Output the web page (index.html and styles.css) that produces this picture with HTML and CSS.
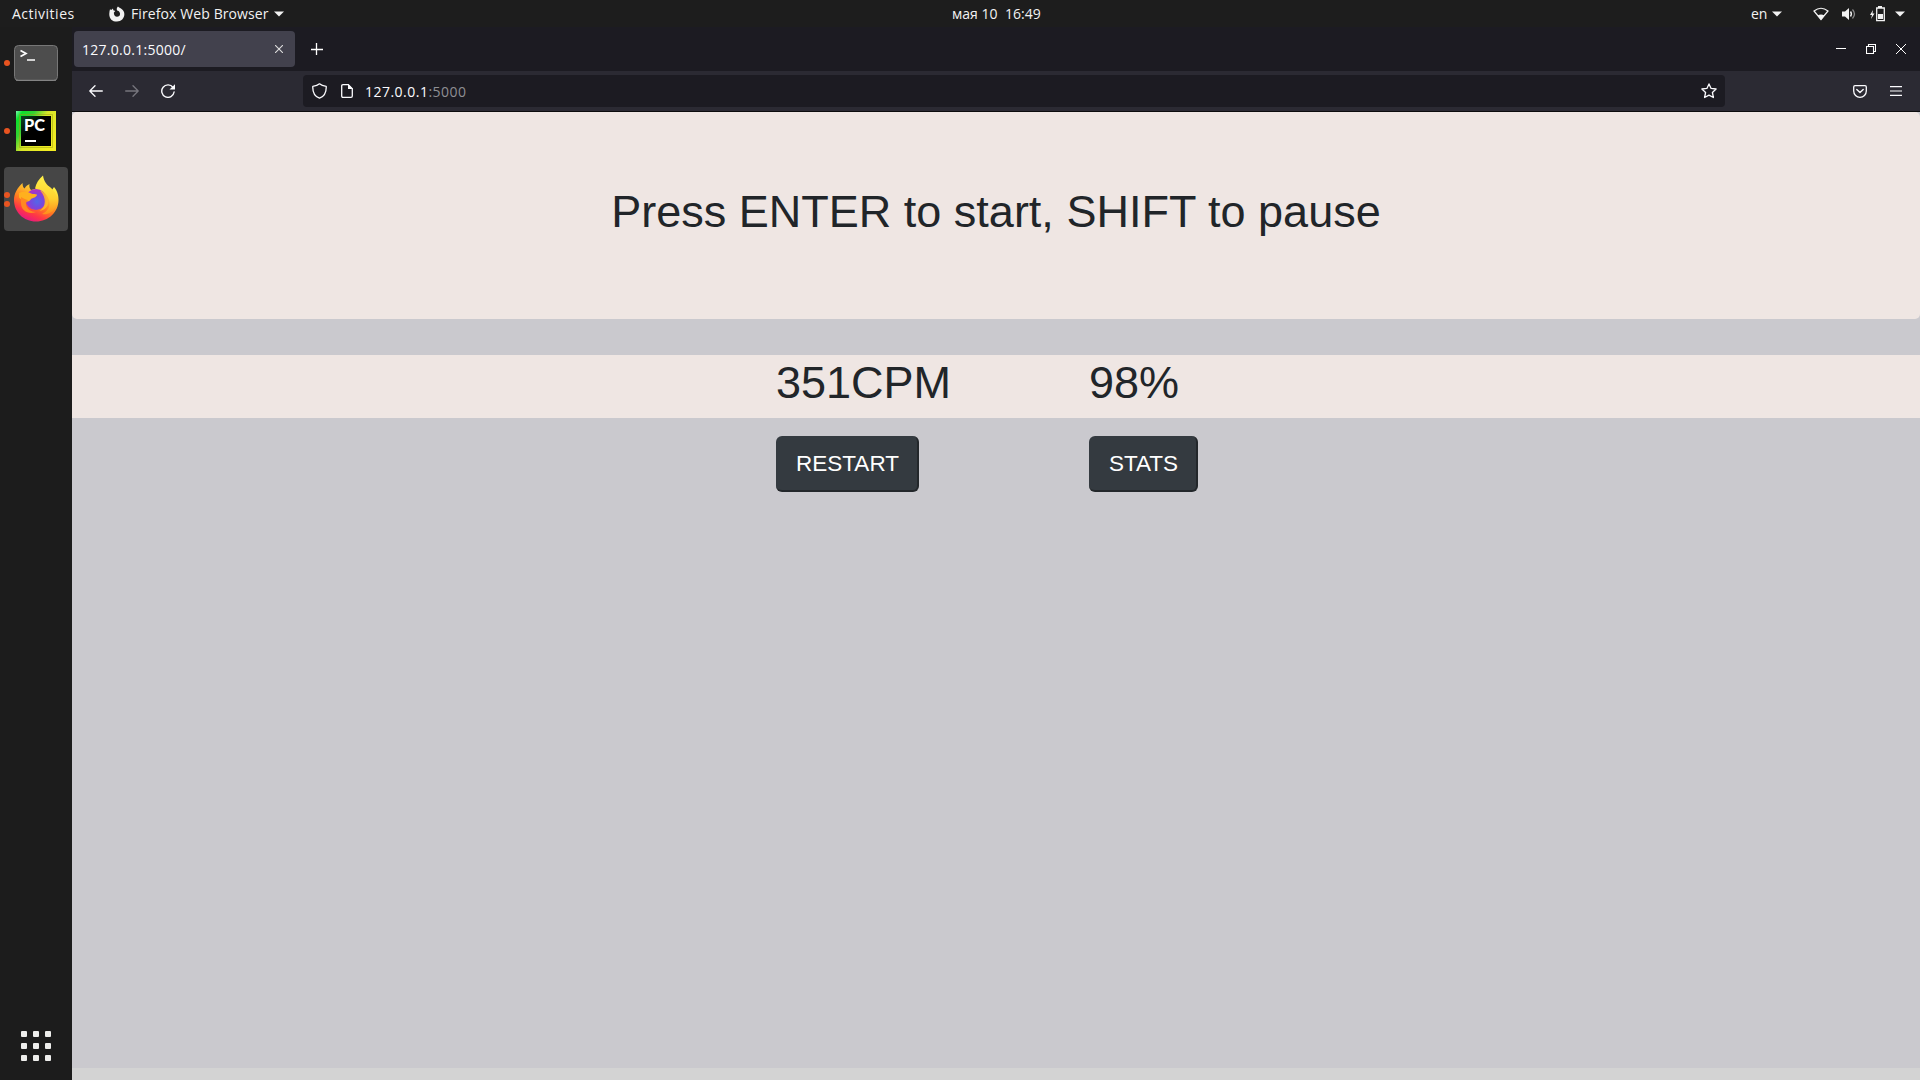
FILE: index.html
```html
<!DOCTYPE html>
<html lang="en">
<head>
<meta charset="utf-8">
<title>127.0.0.1:5000/</title>
<link rel="stylesheet" href="styles.css">
</head>
<body>
<header class="topbar">
  <div class="topbar-left">
    <span class="activities">Activities</span>
    <svg class="app-mark" width="16" height="16" viewBox="0 0 16 16"><path fill="#f2f2f2" d="M1 3.200 2.200 4 4 2.600 4.300 4.200 6.300 5 4.900 6.500C4.700 9 6 10.800 8 10.800S11.300 9.500 11 7.400 9.200 5 8.100 4.500C7.300 3 8 1.300 9 .4 10 2 14 2.500 15 6 16.500 11 13 15.600 8 15.600S0 12.300.3 7.500C.3 5.800.7 4.500 1 3.200z"/></svg>
    <span class="app-name">Firefox Web Browser</span>
    <svg class="caret" width="10" height="6" viewBox="0 0 10 6"><path fill="#f2f2f2" d="M0 .5h10L5 5.500z"/></svg>
  </div>
  <div class="clock"><span class="date">мая 10</span><span class="time">16:49</span></div>
  <div class="topbar-right">
    <span class="lang">en</span>
    <svg class="caret lang-caret" width="10" height="6" viewBox="0 0 10 6"><path fill="#f2f2f2" d="M0 .5h10L5 5.500z"/></svg>
    <svg class="wifi" width="16" height="14" viewBox="0 0 16 14"><path fill="none" stroke="#f2f2f2" stroke-width="1.200" d="M1 4Q8-1.500 15 4L8 12.500z"/><path fill="#f2f2f2" d="M4.500 8.500Q8 6.300 11.500 8.500L8 13z"/></svg>
    <svg class="volume" width="16" height="14" viewBox="0 0 16 14"><path fill="#f2f2f2" d="M1 4.500h3L8 1v12L4 9.500H1z"/><path fill="none" stroke="#f2f2f2" stroke-width="1.400" d="M9.500 4.500Q11.300 7 9.500 9.500"/><path fill="none" stroke="#888" stroke-width="1.300" d="M11.500 2.500Q15.500 7 11.500 11.500"/></svg>
    <svg class="battery" width="15" height="16" viewBox="0 0 15 16"><path fill="#f2f2f2" d="M3 4 0 9h2l-1 4 3.500-5.500H2.500zM8 0h4v2H8zM8 8h5v5H8z"/><path fill="none" stroke="#f2f2f2" stroke-width="1.300" d="M6.700 2h7.600v12.700H6.700z"/></svg>
    <svg class="caret" width="10" height="6" viewBox="0 0 10 6"><path fill="#f2f2f2" d="M0 .5h10L5 5.500z"/></svg>
  </div>
</header>
<div class="desktop">
  <nav class="dock">
    <div class="dock-item">
      <span class="dots"><i></i></span>
      <svg width="44" height="36" viewBox="0 0 44 36"><rect x=".5" y=".5" width="43" height="35" rx="4" fill="#4d4d4d" stroke="#777"/><path d="M2 35.300h40" stroke="#888"/><path fill="none" stroke="#fff" stroke-width="1.700" d="m6.500 5.500 5.500 3-5.500 3M13 15h8"/></svg>
    </div>
    <div class="dock-item">
      <span class="dots"><i></i></span>
      <svg width="40" height="40" viewBox="0 0 40 40">
        <defs><linearGradient id="pc" x1="0" y1="0" x2="1" y2=".7"><stop offset="0" stop-color="#7df5b0"/><stop offset=".12" stop-color="#0be02c"/><stop offset=".32" stop-color="#35d331"/><stop offset=".55" stop-color="#d8e629"/><stop offset="1" stop-color="#f2ec22"/></linearGradient><linearGradient id="pcin" x1="0" y1="0" x2="1" y2="1"><stop offset="0" stop-color="#0b4a20"/><stop offset=".4" stop-color="#000"/></linearGradient></defs>
        <path fill="url(#pc)" d="M0 0h40v40H0z"/><path fill="none" stroke="#9b9d12" stroke-opacity=".5" d="M3.500 3.500h33v33h-33z"/><path fill="url(#pcin)" d="M5 5h30v30H5z"/>
        <text class="pc-text" x="8" y="20" textLength="21" lengthAdjust="spacingAndGlyphs">PC</text><path fill="#fff" d="M9 29h11v2H9z"/>
      </svg>
    </div>
    <div class="dock-item active">
      <span class="dots"><i></i><i></i></span>
      <svg class="firefox" width="46" height="47" viewBox="0 0 46 47">
        <defs><linearGradient id="ff" x1=".8" y1=".1" x2=".3" y2="1"><stop offset="0" stop-color="#fff044"/><stop offset=".3" stop-color="#ffb52a"/><stop offset=".55" stop-color="#ff7b20"/><stop offset=".78" stop-color="#ff3646"/><stop offset="1" stop-color="#e31587"/></linearGradient><radialGradient id="globe" cx=".55" cy=".6"><stop offset="0" stop-color="#5268e8"/><stop offset=".6" stop-color="#7848dc"/><stop offset="1" stop-color="#a536c7"/></radialGradient><linearGradient id="flame" x1="0" y1="0" x2="0" y2="1"><stop offset="0" stop-color="#fff24a"/><stop offset=".6" stop-color="#ffd02e"/><stop offset="1" stop-color="#ff8c1c"/></linearGradient></defs>
        <path fill="url(#ff)" d="M1 25C1 19 4 13 9.500 8c0 3 1 5 2 5.500C13 11 15 9.700 16.500 9c-.5 2 0 4.500 1.500 6l12-3c6-2 8 1 9 3l2-3c4 5 4.500 9 4.500 13 0 12-10 21.500-22.500 21.500S1 37 1 25z"/>
        <path fill="url(#flame)" d="M22 13.500C23 8 26 4 30 .5c1 6.500 4 9.500 8 12.500 6 5 7 12 5 17-3 9-10 10-14 9 6-3 9-8 7-14-2-7-8-10-14-11.500z"/>
        <circle cx="23" cy="24.500" r="10.500" fill="url(#globe)"/>
        <path fill="#ffb01e" d="M6 18c4-1.800 9-1.500 12 .5 2 1 5.500 0 6 1.500-.5 2-4 3-6 4-.5 1.200-1.500 2-3 2.500-3 .5-6-1-9-4z"/>
        <path fill="#ff8820" d="M8 22c3 2 6 3 7 3-1.500 2-2.500 3-2 5 1 4 5 7 10 7-7 3-15-1-15-9z"/>
        <path fill="#ffb72b" fill-opacity=".9" d="M27 15.500c7 2.500 10 9 7.500 15-1.500 3-4.500 5-8 5.500C33 32 34 23 27 15.500z"/>
      </svg>
    </div>
    <svg class="apps" width="30" height="30" viewBox="0 0 30 30"><g fill="#eeeeec"><rect width="6" height="6" rx="1"/><rect x="12" width="6" height="6" rx="1"/><rect x="24" width="6" height="6" rx="1"/><rect y="12" width="6" height="6" rx="1"/><rect x="12" y="12" width="6" height="6" rx="1"/><rect x="24" y="12" width="6" height="6" rx="1"/><rect y="24" width="6" height="6" rx="1"/><rect x="12" y="24" width="6" height="6" rx="1"/><rect x="24" y="24" width="6" height="6" rx="1"/></g></svg>
  </nav>
  <main class="window">
    <div class="tabs">
      <div class="tab"><span class="tab-title">127.0.0.1:5000/</span><svg width="8" height="8" viewBox="0 0 8 8"><path stroke="#ddd" stroke-width="1.100" d="m0 0 8 8M8 0 0 8"/></svg></div>
      <svg class="new-tab" width="12" height="12" viewBox="0 0 12 12"><path stroke="#fff" stroke-width="1.300" d="M0 6.500h12M5.500 0v12"/></svg>
      <div class="controls">
        <svg width="10" height="10" viewBox="0 0 10 10"><path stroke="#fff" d="M0 4.500h10"/></svg>
        <svg width="10" height="10" viewBox="0 0 10 10"><path fill="none" stroke="#fff" stroke-width="1.100" d="M.5 2.500h7v7h-7zM2.500 2.500v-2h7v7h-2"/></svg>
        <svg width="10" height="10" viewBox="0 0 10 10"><path stroke="#fff" d="m0 0 10 10M10 0 0 10"/></svg>
      </div>
    </div>
    <div class="toolbar">
      <svg class="back" width="14" height="12" viewBox="0 0 14 12"><path fill="none" stroke="#fbfbfe" stroke-width="1.300" stroke-linecap="round" stroke-linejoin="round" d="M13.300 6H.8M6 .8.8 6 6 11.200"/></svg>
      <svg class="forward" width="14" height="12" viewBox="0 0 14 12"><path fill="none" stroke="#77767e" stroke-width="1.300" stroke-linecap="round" stroke-linejoin="round" d="M.7 6h12.500M8 .8 13.200 6 8 11.200"/></svg>
      <svg class="reload" width="14" height="14" viewBox="0 0 14 14"><path fill="none" stroke="#fbfbfe" stroke-width="1.400" stroke-linecap="round" d="M12 3.500A6.200 6.200 0 1 0 13.100 8"/><path fill="#fbfbfe" d="M14 .3V5.500H8.500z"/></svg>
      <div class="urlbar">
        <svg class="shield" width="15" height="16" viewBox="0 0 15 16"><path fill="none" stroke="#fbfbfe" stroke-width="1.300" stroke-linejoin="round" d="M7.500.8C9.500 2.500 12 3 14.200 3.300 14.500 9 12 13.500 7.500 15.200 3 13.500.5 9 .8 3.300 3 3 5.500 2.500 7.500.8z"/></svg>
        <svg class="doc" width="12" height="14" viewBox="0 0 12 14"><path fill="none" stroke="#fbfbfe" stroke-width="1.300" d="M2 .7h5.300l4 4V12q0 1.300-1.300 1.300H2Q.7 13.300.7 12V2Q.7.7 2 .7z"/><path fill="#fbfbfe" d="M7 0v5h5z"/></svg>
        <span class="url">127.0.0.1<span class="port">:5000</span></span>
        <svg class="star" width="16" height="16" viewBox="0 0 16 16"><path fill="none" stroke="#fbfbfe" stroke-width="1.300" stroke-linejoin="round" d="m8 .9 2.100 4.500 5 .6-3.700 3.500 1 5L8 12.100l-4.400 2.400 1-5L.9 6l5-.6z"/></svg>
      </div>
      <svg class="pocket" width="14" height="13" viewBox="0 0 14 13"><path fill="none" stroke="#fbfbfe" stroke-width="1.300" d="M2 .7h10q1.300 0 1.300 1.300v4a6.300 6.300 0 0 1-12.600 0V2Q.7.7 2 .7z"/><path fill="none" stroke="#fbfbfe" stroke-width="1.400" stroke-linecap="round" stroke-linejoin="round" d="m3.800 4.600 3.200 3 3.200-3"/></svg>
      <svg class="menu" width="12" height="10" viewBox="0 0 12 10"><path stroke="#fbfbfe" stroke-width="1.200" d="M0 .6h12M0 5h12M0 9.400h12"/></svg>
    </div>
    <section class="page">
      <div class="jumbotron"><h1>Press ENTER to start, SHIFT to pause</h1></div>
      <div class="scores"><span class="speed">351CPM</span><span>98%</span></div>
      <div class="actions"><button class="btn restart">RESTART</button><button class="btn stats">STATS</button></div>
      <div class="page-end"></div>
    </section>
  </main>
</div>
</body>
</html>
```
FILE: styles.css
```css
* { box-sizing: border-box; }
body { margin: 0; width: 1920px; height: 1080px; overflow: hidden; display: flex; flex-direction: column; background: #1d1d1d; color: #f2f2f2; font: 14px/20px "Open Sans", "Noto Sans", sans-serif; }
svg { display: block; flex: none; }
span { white-space: nowrap; }

.topbar { height: 27px; flex: none; display: grid; grid-template-columns: 952px 1fr 1fr; align-items: center; background: #1d1d1d; }
.topbar-left, .topbar-right, .clock { display: flex; align-items: center; }
.activities { width: 97px; padding-left: 12px; letter-spacing: .5px; }
.app-mark { margin-left: 12px; margin-right: 6px; }
.app-name { width: 138px; letter-spacing: .1px; }
.caret { margin-left: 5px; }
.date { width: 53px; }
.topbar-right { justify-content: flex-end; padding-right: 15px; }
.lang { width: 16px; }
.lang-caret { margin-right: 31px; }
.wifi { margin-right: 12px; }
.volume { margin-right: 13px; }
.battery { margin-right: 5px; }

.desktop { flex: 1; display: flex; }
.dock { width: 72px; flex: none; display: flex; flex-direction: column; align-items: center; padding: 4px 4px 19px; gap: 4px; background: #1c1c1c; }
.dock-item { width: 64px; height: 64px; flex: none; display: flex; align-items: center; border-radius: 4px; }
.dock-item.active { background: #464646; }
.dots { width: 10px; display: flex; flex-direction: column; gap: 3px; }
.dots i { width: 6px; height: 6px; border-radius: 50%; background: #e95420; }
.dock-item.active .dots { width: 9px; }
.dock-item:nth-child(2) .dots { width: 12px; }
.firefox { margin-bottom: 2px; }
.pc-text { font: 900 16px Lato, "Open Sans", sans-serif; fill: #fff; }
.apps { margin-top: auto; }

.window { flex: 1; display: flex; flex-direction: column; }
.tabs { height: 44px; flex: none; display: flex; align-items: center; background: #1c1b22; padding: 0 14px 0 2px; }
.tab { width: 221px; height: 36px; display: flex; align-items: center; justify-content: space-between; padding: 0 12px 0 8px; border-radius: 4px; background: #42414d; color: #fbfbfe; }
.tab-title { padding-top: 2px; letter-spacing: .27px; }
.new-tab { margin-left: 16px; }
.controls { margin-left: auto; display: flex; gap: 20px; }

.toolbar { height: 41px; flex: none; display: flex; align-items: center; background: #2b2a33; border-bottom: 1px solid #0c0c0d; padding: 0 18px 0 17px; }
.forward { margin-left: 22px; }
.reload { margin-left: 22px; }
.urlbar { width: 1422px; height: 32px; display: flex; align-items: center; margin-left: 128px; padding: 0 8px; border-radius: 4px; background: #1c1b22; color: #fbfbfe; }
.shield { margin-left: 1px; }
.doc { margin-left: 14px; margin-right: 12px; }
.url { padding-top: 2px; letter-spacing: .48px; }
.port { color: #8f8f94; }
.star { margin-left: auto; }
.pocket { margin-left: auto; }
.menu { margin-left: 23px; }

.page { flex: 1; display: flex; flex-direction: column; background: #cac9ce; color: #212529; font-family: "Liberation Sans", Arial, sans-serif; }
.jumbotron { height: 207px; padding-top: 73px; border-radius: 5px; background: #efe6e3; text-align: center; }
h1 { margin: 0; font-size: 45px; line-height: 54px; font-weight: 400; }
.scores { display: flex; height: 63px; margin-top: 36px; padding: 1px 0 0 704px; background: #efe6e3; font-size: 45px; line-height: 54px; }
.speed { width: 313px; }
.actions { display: flex; margin: 18px 0 0 704px; gap: 170px; }
.btn { height: 56px; padding: 2px 0 0 2px; border: 0 solid #23272b; border-width: 0 2px 2px 0; border-radius: 6px; background: #343a40; color: #fff; font: 22.5px "Liberation Sans", Arial, sans-serif; }
.restart { width: 143px; }
.stats { width: 109px; }
.page-end { height: 12px; margin-top: auto; background: #d3d3d3; }
```
